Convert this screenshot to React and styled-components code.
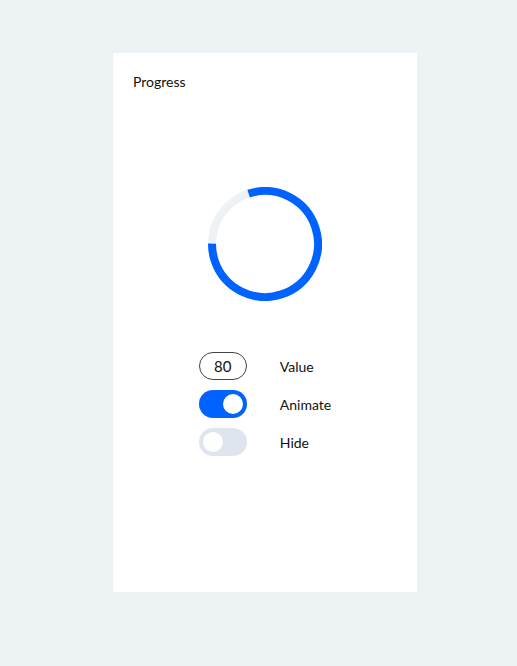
import styled, { createGlobalStyle } from "styled-components";

const GlobalStyle = createGlobalStyle`
  body {
    margin: 0;
    background: #edf2f5;
    font-family: Lato, "Liberation Sans", sans-serif;
  }
`;

const Page = styled.div`
  width: 517px;
  height: 666px;
  padding: 53px 0 0 113px;
  box-sizing: border-box;
`;

const Card = styled.div`
  width: 304px;
  height: 539px;
  background: #fff;
  padding: 20px;
  box-sizing: border-box;
  display: flex;
  flex-direction: column;
`;

const Title = styled.div`
  font-size: 14px;
  line-height: 17px;
  color: #111;
`;

const RingWrap = styled.div`
  margin-top: 97px;
  display: flex;
  justify-content: center;
`;

const Controls = styled.div`
  margin-top: 51px;
  display: grid;
  grid-template-columns: 48px auto;
  column-gap: 33px;
  row-gap: 10px;
  justify-content: center;
  align-items: center;
`;

const ValueBox = styled.div`
  width: 48px;
  height: 28px;
  box-sizing: border-box;
  border: 1px solid #444;
  border-radius: 14px;
  display: flex;
  align-items: center;
  justify-content: center;
  font-size: 15px;
  color: #111;
`;

const Toggle = styled.div`
  width: 48px;
  height: 28px;
  border-radius: 14px;
  background: ${(p) => (p.$on ? "#0062ff" : "#dfe5ef")};
  position: relative;
`;

const Knob = styled.span`
  position: absolute;
  top: 4px;
  left: ${(p) => (p.$on ? "24px" : "4px")};
  width: 20px;
  height: 20px;
  border-radius: 50%;
  background: #fff;
`;

const Label = styled.div`
  font-size: 14px;
  color: #111;
`;

const Ring = ({ value }) => {
  const r = 53;
  const c = 2 * Math.PI * r;
  return (
    <svg width="114" height="114" viewBox="0 0 114 114">
      <circle cx="57" cy="57" r={r} fill="none" stroke="#edf2f5" strokeWidth="8" />
      <circle
        cx="57"
        cy="57"
        r={r}
        fill="none"
        stroke="#0062ff"
        strokeWidth="8"
        strokeDasharray={`${(c * value) / 100} ${c}`}
        transform={`rotate(${180 - (360 * value) / 100} 57 57)`}
      />
    </svg>
  );
};

const App = () => {
  const value = 80;
  return (
    <Page>
      <GlobalStyle />
      <Card>
        <Title>Progress</Title>
        <RingWrap>
          <Ring value={value} />
        </RingWrap>
        <Controls>
          <ValueBox>{value}</ValueBox>
          <Label>Value</Label>
          <Toggle $on>
            <Knob $on />
          </Toggle>
          <Label>Animate</Label>
          <Toggle>
            <Knob />
          </Toggle>
          <Label>Hide</Label>
        </Controls>
      </Card>
    </Page>
  );
};

export default App;
